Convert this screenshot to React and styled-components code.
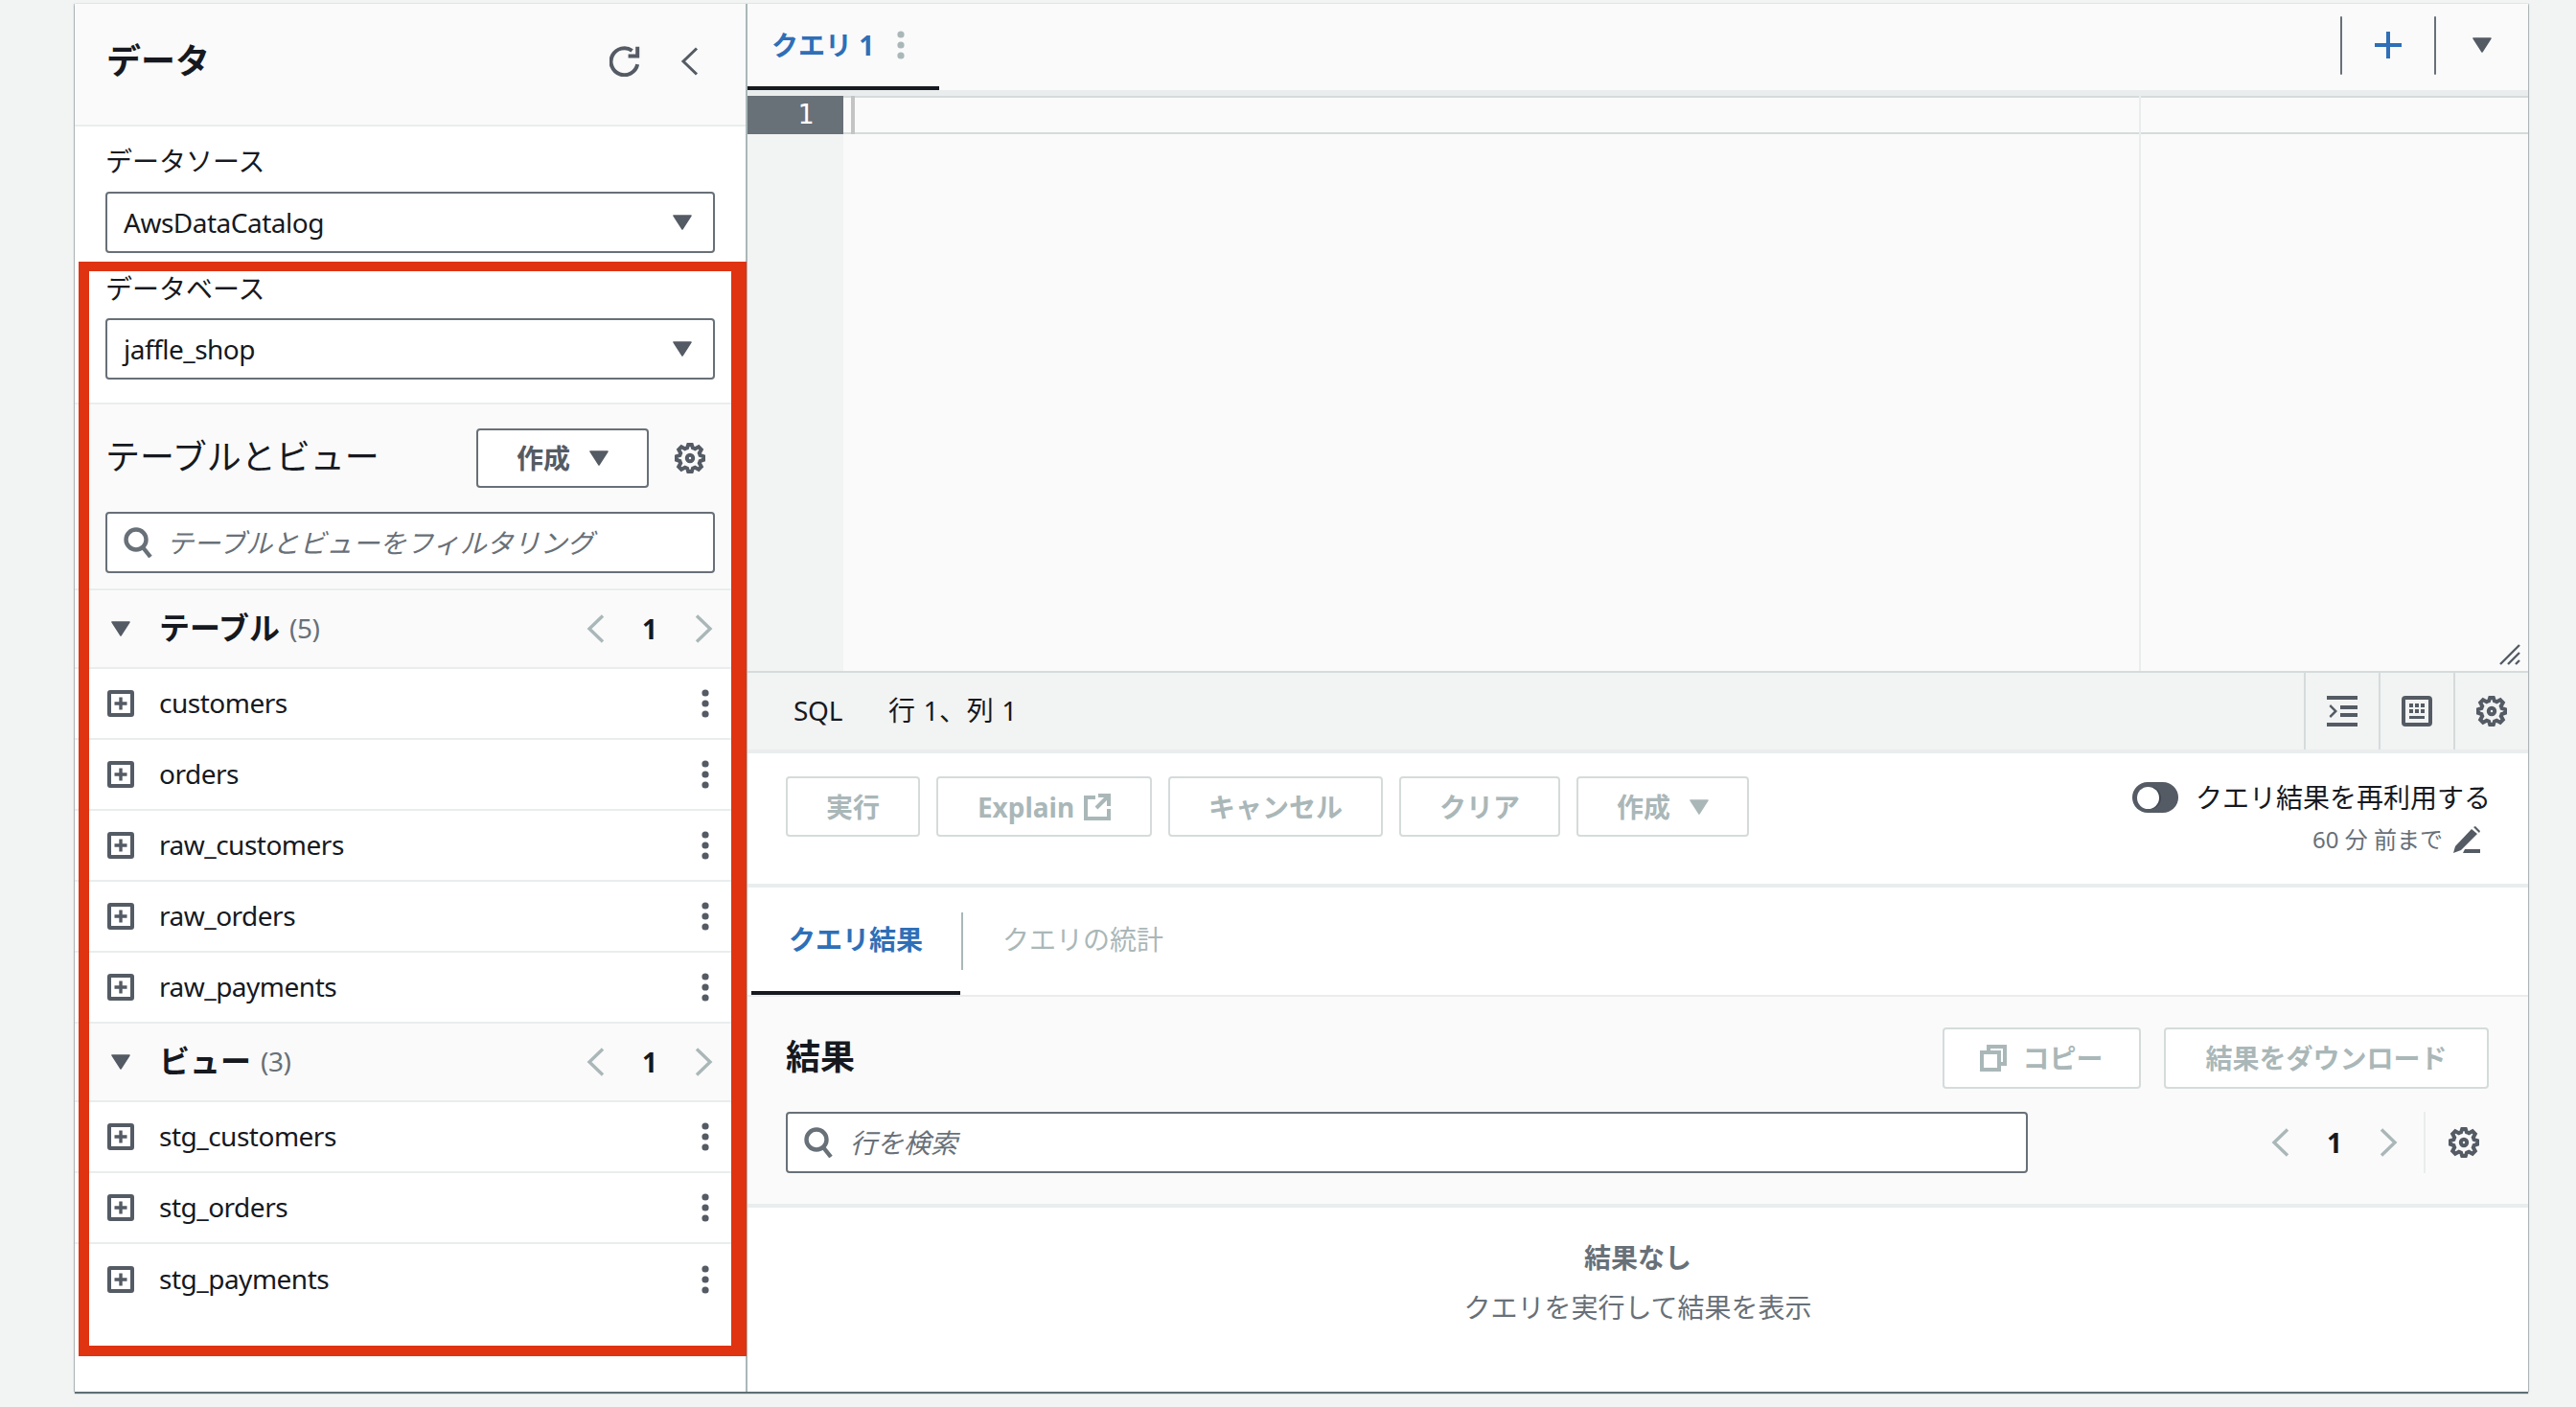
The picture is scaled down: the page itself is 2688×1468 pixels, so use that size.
import styled, { createGlobalStyle } from "styled-components";

const GlobalStyle = createGlobalStyle`
  html, body {
    margin: 0;
    padding: 0;
    background: #f2f3f3;
  }
  * {
    box-sizing: border-box;
  }
  body {
    font-family: "Noto Sans", "Noto Sans CJK JP", sans-serif;
    font-size: 28px;
    line-height: 36px;
    color: #16191f;
  }
`;

const Page = styled.div`
  width: 2688px;
  height: 1468px;
  padding: 4px 50px 0 78px;
  overflow: hidden;
`;

const Frame = styled.div`
  position: relative;
  display: grid;
  grid-template-columns: 702px 1fr;
  height: 1448px;
  background: #fff;
  box-shadow: 0 2px 1px rgba(0, 28, 36, 0.6), 1px 0 1px rgba(0, 28, 36, 0.2), -1px 0 1px rgba(0, 28, 36, 0.2);
`;

const Highlight = styled.div`
  position: absolute;
  left: 4px;
  top: 269px;
  width: 697px;
  height: 1142px;
  border: solid #df3312;
  border-width: 10px 16px 11px 11px;
  pointer-events: none;
`;

/* left panel */
const Side = styled.aside`
  display: flex;
  flex-direction: column;
  border-right: 2px solid #aab7b8;
`;

const SideHead = styled.div`
  display: flex;
  align-items: center;
  gap: 42px;
  height: 128px;
  padding: 0 48px 6px 33px;
  background: #fafafa;
  border-bottom: 2px solid #eaeded;
  h1 {
    flex: 1;
    margin: 0;
    font-size: 36px;
    font-weight: 700;
    line-height: 44px;
  }
`;

const Sources = styled.div`
  padding: 18px 32px 24px;
  border-bottom: 2px solid #eaeded;
`;

const Label = styled.div`
  height: 36px;
  margin-bottom: 14px;
  margin-top: ${(p) => (p.$second ? "19px" : "0")};
  margin-bottom: ${(p) => (p.$second ? "13px" : "14px")};
`;

const Box = styled.div`
  display: flex;
  align-items: center;
  justify-content: space-between;
  gap: ${(p) => p.$gap || "0"};
  width: ${(p) => p.$width || "100%"};
  height: 64px;
  padding: 0 22px 0 17px;
  background: #fff;
  border: 2px solid #687078;
  border-radius: 4px;
`;

const BoxValue = styled.span`
  letter-spacing: -0.5px;
`;

const Placeholder = styled.span`
  flex: 1;
  font-style: italic;
  color: #687078;
`;

const TableTools = styled.div`
  padding: 25px 42px 16px 32px;
  background: #fafafa;
  border-bottom: 2px solid #eaeded;
`;

const ToolsRow = styled.div`
  display: flex;
  align-items: center;
  gap: 27px;
  margin-bottom: 25px;
  h2 {
    flex: 1;
    margin: 0 0 2px;
    font-size: 36px;
    font-weight: 400;
    line-height: 44px;
  }
`;

const FilterWrap = styled.div`
  margin-right: -10px;
`;

const GroupHead = styled.div`
  display: flex;
  align-items: center;
  height: 82px;
  padding: 0 16px 0 38px;
  background: #fafafa;
  border-bottom: 2px solid #eaeded;
  h3 {
    margin: 0 0 3px 30px;
    font-size: 32px;
    font-weight: 700;
    line-height: 40px;
  }
  span.count {
    flex: 1;
    margin: 0 0 2px 10px;
    color: #687078;
    letter-spacing: -0.5px;
  }
`;

const Row = styled.div`
  display: flex;
  align-items: center;
  gap: 26px;
  height: 74px;
  padding: 0 38px 0 34px;
  border-bottom: ${(p) => (p.$last ? "none" : "2px solid #eaeded")};
  span {
    flex: 1;
    letter-spacing: -0.5px;
    margin-bottom: 2px;
  }
`;

const Pager = styled.div`
  display: flex;
  align-items: center;
  font-weight: 700;
  > * {
    display: flex;
    justify-content: center;
    width: 56px;
  }
`;

/* right panel */
const Main = styled.main`
  display: flex;
  flex-direction: column;
  min-width: 0;
`;

const TabBar = styled.div`
  display: flex;
  justify-content: space-between;
  height: 90px;
  background: #fafafa;
`;

const QueryTab = styled.div`
  display: flex;
  align-items: center;
  gap: 24px;
  width: 200px;
  padding-left: 25px;
  border-bottom: 4px solid #16191f;
  font-weight: 700;
  color: #2e6fb7;
`;

const TabActions = styled.div`
  display: flex;
  align-items: center;
  height: 86px;
`;

const TabDivider = styled.div`
  width: 2px;
  height: 61px;
  background: #687078;
  border-radius: 1px;
`;

const TabAction = styled.div`
  display: flex;
  align-items: center;
  justify-content: center;
  width: 96px;
`;

const Strip = styled.div`
  height: 6px;
  background: #eaeded;
`;

const Editor = styled.div`
  position: relative;
  display: flex;
  height: 602px;
  background: #fafafa;
  border-bottom: 2px solid #d5dbdb;
`;

const Gutter = styled.div`
  width: 100px;
  background: #f2f3f3;
`;

const LineNumber = styled.div`
  height: 40px;
  padding-right: 31px;
  background: #687078;
  color: #fff;
  font-family: "DejaVu Sans Mono", monospace;
  font-size: 28px;
  line-height: 40px;
  text-align: right;
`;

const ActiveLine = styled.div`
  flex: 1;
  height: 40px;
  border-top: 2px solid #d5dbdb;
  border-bottom: 2px solid #d5dbdb;
`;

const Cursor = styled.div`
  position: absolute;
  left: 108px;
  top: 0;
  width: 4px;
  height: 40px;
  background: #c4c4c4;
`;

const PrintMargin = styled.div`
  position: absolute;
  left: 1452px;
  top: 0;
  bottom: 0;
  width: 2px;
  background: #eaeded;
`;

const ResizeMark = styled.svg`
  position: absolute;
  right: 8px;
  bottom: 6px;
`;

const StatusBar = styled.div`
  display: flex;
  align-items: stretch;
  height: 84px;
  padding-left: 48px;
  background: #f2f3f3;
  border-bottom: 4px solid #eaeded;
  span {
    align-self: center;
    margin: 0 48px 2px 0;
    letter-spacing: -0.3px;
  }
  span + span {
    flex: 1;
    margin-right: 0;
    letter-spacing: 0.6px;
  }
`;

const StatusIcon = styled.div`
  display: flex;
  align-items: center;
  justify-content: center;
  width: 78px;
  border-left: 2px solid #d5dbdb;
`;

const Actions = styled.div`
  display: flex;
  justify-content: space-between;
  height: 140px;
  padding: 24px 39px 0 40px;
  background: #fff;
  border-bottom: 4px solid #eaeded;
`;

const ButtonRow = styled.div`
  display: flex;
  gap: 17px;
`;

const Button = styled.div`
  display: flex;
  align-items: center;
  justify-content: center;
  gap: ${(p) => p.$gap || "8px"};
  width: ${(p) => p.$width || "auto"};
  height: ${(p) => p.$height || "63px"};
  padding: ${(p) => (p.$width ? "0" : "0 40px")};
  background: #fff;
  border: 2px solid ${(p) => (p.$active ? "#687078" : "#d5dbdb")};
  border-radius: 4px;
  color: ${(p) => (p.$active ? "#545b64" : "#aab7b8")};
  font-weight: 700;
`;

const Reuse = styled.div`
  display: flex;
  flex-direction: column;
  align-items: flex-end;
  margin-top: 6px;
`;

const ToggleRow = styled.div`
  display: flex;
  align-items: center;
  gap: 18px;
  height: 32px;
  line-height: 30px;
`;

const Toggle = styled.div`
  width: 48px;
  height: 32px;
  padding: 5px;
  background: #545b64;
  border-radius: 16px;
  &::before {
    content: "";
    display: block;
    width: 23px;
    height: 23px;
    background: #fff;
    border-radius: 50%;
    box-shadow: 2px 0 0 #414750;
  }
`;

const Limit = styled.div`
  display: flex;
  align-items: center;
  gap: 11px;
  margin: 13px 11px 0 0;
  font-size: 24px;
  line-height: 30px;
  color: #687078;
`;

const Tabs = styled.div`
  display: flex;
  align-items: center;
  height: 114px;
  padding-left: 4px;
  background: #fff;
  border-bottom: 2px solid #eaeded;
`;

const ResultTab = styled.div`
  display: flex;
  align-items: center;
  align-self: stretch;
  justify-content: center;
  width: ${(p) => (p.$active ? "218px" : "auto")};
  padding-left: ${(p) => (p.$active ? "0" : "41px")};
  border-bottom: 4px solid ${(p) => (p.$active ? "#16191f" : "transparent")};
  font-weight: ${(p) => (p.$active ? 700 : 400)};
  color: ${(p) => (p.$active ? "#2e6fb7" : "#aab7b8")};
`;

const TabSplit = styled.div`
  width: 2px;
  height: 60px;
  margin-left: 1px;
  background: #aab7b8;
`;

const ResultHead = styled.div`
  display: flex;
  flex-direction: column;
  gap: 24px;
  padding: 32px 41px 32px 40px;
  background: #fafafa;
  border-bottom: 4px solid #eaeded;
`;

const ResultTitle = styled.div`
  display: flex;
  align-items: center;
  gap: 24px;
  height: 64px;
  h2 {
    flex: 1;
    margin: 0 0 2px;
    font-size: 36px;
    font-weight: 700;
    line-height: 44px;
  }
`;

const ResultSearch = styled.div`
  display: flex;
  align-items: center;
  padding-right: 10px;
`;

const SearchSpacer = styled.div`
  flex: 1;
`;

const ResultSplit = styled.div`
  align-self: stretch;
  width: 2px;
  margin: 0 24px 0 9px;
  background: #eaeded;
`;

const Empty = styled.div`
  flex: 1;
  padding-top: 32px;
  background: #fff;
  text-align: center;
  color: #687078;
  strong {
    display: block;
    margin-bottom: 12px;
    line-height: 40px;
  }
  div {
    line-height: 40px;
  }
`;

const Icon = styled.svg`
  flex: none;
  display: block;
  fill: none;
  stroke: ${(p) => p.$color || "#545b64"};
  stroke-width: ${(p) => p.$stroke || 2};
`;

const Caret = ({ color = "#545b64" }) => (
  <svg width="20" height="16" viewBox="0 0 20 16" style={{ flex: "none", display: "block" }}>
    <path d="M1 1h18L10 15z" fill={color} stroke={color} strokeWidth="1.5" strokeLinejoin="round" />
  </svg>
);

const Gear = ({ color }) => (
  <Icon width="32" height="32" viewBox="0 0 16 16" $color={color} $stroke="2">
    <path d="M12.9 5.4l1-1.9-1.4-1.4-1.9 1c-.4-.2-.7-.3-1.1-.4L8.9 1H7.1l-.6 1.7c-.4.1-.7.2-1.1.4l-1.9-1-1.4 1.4 1 1.9c-.2.4-.3.7-.4 1.1L1 7.1v1.8l1.7.6c.1.4.2.7.4 1.1l-1 1.9 1.4 1.4 1.9-1c.4.2.7.3 1.1.4l.6 1.7h1.8l.6-1.7c.4-.1.7-.2 1.1-.4l1.9 1 1.4-1.4-1-1.9c.2-.4.3-.7.4-1.1l1.7-.6V7.1l-1.7-.6c-.1-.4-.2-.7-.4-1.1z" />
    <circle cx="8" cy="8" r="1.6" />
  </Icon>
);

const Chevron = ({ dir = "left", color = "#aab7b8", stroke = 3.4, height = 30 }) => (
  <Icon width="20" height={height} viewBox="0 0 20 30" $color={color} $stroke={stroke}>
    <path d={dir === "left" ? "M17 1.5 3 15l14 13.5" : "M3 1.5 17 15 3 28.5"} />
  </Icon>
);

const Dots = ({ color = "#545b64" }) => (
  <svg width="8" height="32" viewBox="0 0 8 32" style={{ flex: "none", display: "block" }}>
    <circle cx="4" cy="5" r="3.6" fill={color} />
    <circle cx="4" cy="16" r="3.6" fill={color} />
    <circle cx="4" cy="27" r="3.6" fill={color} />
  </svg>
);

const Search = () => (
  <Icon width="30" height="32" viewBox="0 0 30 32" $color="#687078" $stroke="4.4">
    <circle cx="13" cy="13" r="10.5" />
    <path d="m20 21 8 10" />
  </Icon>
);

const PlusBox = () => (
  <Icon width="28" height="28" viewBox="0 0 28 28" $stroke="4">
    <rect x="2" y="2" width="24" height="24" rx="1" />
    <path d="M14 7.5v13M7.5 14h13" strokeWidth="3.4" />
  </Icon>
);

const Paging = () => (
  <Pager>
    <div><Chevron /></div>
    <div>1</div>
    <div><Chevron dir="right" /></div>
  </Pager>
);

const tables = ["customers", "orders", "raw_customers", "raw_orders", "raw_payments"];
const views = ["stg_customers", "stg_orders", "stg_payments"];

const Group = ({ title, items }) => (
  <>
    <GroupHead>
      <Caret />
      <h3>{title}</h3>
      <span className="count">({items.length})</span>
      <Paging />
    </GroupHead>
    {items.map((name, i) => (
      <Row key={name} $last={title === "ビュー" && i === items.length - 1}>
        <PlusBox />
        <span>{name}</span>
        <Dots />
      </Row>
    ))}
  </>
);

function App() {
  return (
    <Page>
      <GlobalStyle />
      <Frame>
        <Side>
          <SideHead>
            <h1>データ</h1>
            <Icon width="32" height="32" viewBox="0 0 16 16" $stroke="2">
              <path d="M14.6 9.6A7 7 0 1 1 11.8 2.4" />
              <path d="M14.6.4v4.8H9.8" />
            </Icon>
            <Chevron height={32} stroke={3} color="#545b64" />
          </SideHead>
          <Sources>
            <Label>データソース</Label>
            <Box>
              <BoxValue>AwsDataCatalog</BoxValue>
              <Caret />
            </Box>
            <Label $second>データベース</Label>
            <Box>
              <BoxValue>jaffle_shop</BoxValue>
              <Caret />
            </Box>
          </Sources>
          <TableTools>
            <ToolsRow>
              <h2>テーブルとビュー</h2>
              <Button $active $width="180px" $height="62px" $gap="20px">
                作成
                <Caret />
              </Button>
              <Gear />
            </ToolsRow>
            <FilterWrap>
              <Box $gap="15px">
                <Search />
                <Placeholder>テーブルとビューをフィルタリング</Placeholder>
              </Box>
            </FilterWrap>
          </TableTools>
          <Group title="テーブル" items={tables} />
          <Group title="ビュー" items={views} />
        </Side>

        <Main>
          <TabBar>
            <QueryTab>
              クエリ 1
              <Dots color="#aab7b8" />
            </QueryTab>
            <TabActions>
              <TabDivider />
              <TabAction>
                <Icon width="28" height="28" viewBox="0 0 28 28" $color="#2e6fb7" $stroke="4">
                  <path d="M14 0v28M0 14h28" />
                </Icon>
              </TabAction>
              <TabDivider />
              <TabAction>
                <Caret />
              </TabAction>
            </TabActions>
          </TabBar>
          <Strip />
          <Editor>
            <Gutter>
              <LineNumber>1</LineNumber>
            </Gutter>
            <ActiveLine />
            <Cursor />
            <PrintMargin />
            <ResizeMark width="22" height="22" viewBox="0 0 22 22" stroke="#545b64" strokeWidth="2.4">
              <path d="M1 21 21 1M9 21 21 9M17 21l4-4" />
            </ResizeMark>
          </Editor>
          <StatusBar>
            <span>SQL</span>
            <span>行 1、列 1</span>
            <StatusIcon>
              <svg width="32" height="32" viewBox="0 0 32 32" fill="#545b64">
                <path d="M0 0h32v4H0zM0 28h32v4H0zM14 10h18v4H14zM14 18h18v4H14zM4 9l7 7-7 7-1.5-2 5-5-5-5z" />
              </svg>
            </StatusIcon>
            <StatusIcon>
              <svg width="32" height="32" viewBox="0 0 32 32">
                <rect x="2" y="2" width="28" height="28" rx="2" fill="none" stroke="#545b64" strokeWidth="4" />
                <path d="M8 8h4v4H8zM14 8h4v4h-4zM20 8h4v4h-4zM8 14h4v4H8zM14 14h4v4h-4zM20 14h4v4h-4zM8 21h16v3H8z" fill="#545b64" />
              </svg>
            </StatusIcon>
            <StatusIcon>
              <Gear />
            </StatusIcon>
          </StatusBar>
          <Actions>
            <ButtonRow>
              <Button>実行</Button>
              <Button $width="225px" $gap="10px">
                Explain
                <Icon width="28" height="28" viewBox="0 0 28 28" $color="#aab7b8" $stroke="4">
                  <path d="M12 4H2v22h24V16M15 2h11v11M26 2 13 15" />
                </Icon>
              </Button>
              <Button>キャンセル</Button>
              <Button>クリア</Button>
              <Button $width="180px" $gap="20px">
                作成
                <Caret color="#aab7b8" />
              </Button>
            </ButtonRow>
            <Reuse>
              <ToggleRow>
                <Toggle />
                クエリ結果を再利用する
              </ToggleRow>
              <Limit>
                60 分 前まで
                <svg width="28" height="28" viewBox="0 0 28 28" fill="#545b64">
                  <path d="M0 28l2-7L19 3l6 5L8 25zM21 1l2-1 5 5-1 2zM12 24h16v4H10z" />
                </svg>
              </Limit>
            </Reuse>
          </Actions>
          <Tabs>
            <ResultTab $active>クエリ結果</ResultTab>
            <TabSplit />
            <ResultTab>クエリの統計</ResultTab>
          </Tabs>
          <ResultHead>
            <ResultTitle>
              <h2>結果</h2>
              <Button $width="207px" $height="64px" $gap="16px">
                <Icon width="28" height="28" viewBox="0 0 28 28" $color="#aab7b8" $stroke="4">
                  <path d="M9 7V2h17v18h-6M2 8h18v18H2z" />
                </Icon>
                コピー
              </Button>
              <Button $width="339px" $height="64px">結果をダウンロード</Button>
            </ResultTitle>
            <ResultSearch>
              <Box $width="1296px" $gap="18px">
                <Search />
                <Placeholder>行を検索</Placeholder>
              </Box>
              <SearchSpacer />
              <Paging />
              <ResultSplit />
              <Gear />
            </ResultSearch>
          </ResultHead>
          <Empty>
            <strong>結果なし</strong>
            <div>クエリを実行して結果を表示</div>
          </Empty>
        </Main>
        <Highlight />
      </Frame>
    </Page>
  );
}

export default App;
